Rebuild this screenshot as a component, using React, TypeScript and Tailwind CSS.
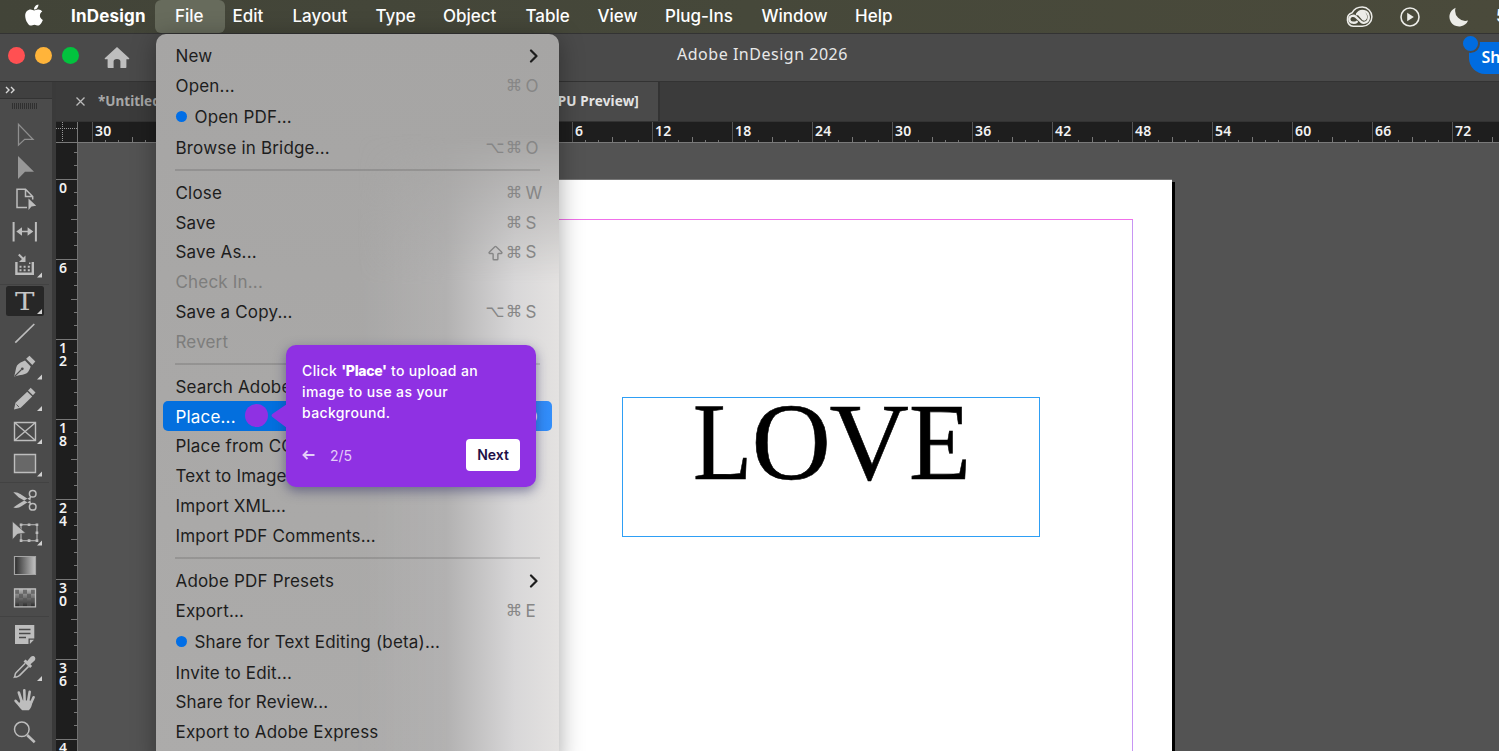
import type { ReactNode } from 'react';
import { ArrowBigUp } from 'lucide-react';
import { FaApple } from 'react-icons/fa';

const ICON = '#bdbdbd';

const menuBarItems = [
  { label: 'Edit', width: 'w-[60px]' },
  { label: 'Layout', width: 'w-[83px]' },
  { label: 'Type', width: 'w-[67.5px]' },
  { label: 'Object', width: 'w-[82.5px]' },
  { label: 'Table', width: 'w-[72px]' },
  { label: 'View', width: 'w-[67.5px]' },
  { label: 'Plug-Ins', width: 'w-[96.5px]' },
  { label: 'Window', width: 'w-[93.5px]' },
  { label: 'Help', width: 'w-[60px]' },
];

type MenuEntry = {
  label: string;
  keys?: string;
  letter?: string;
  dot?: boolean;
  submenu?: boolean;
  disabled?: boolean;
  active?: boolean;
};

const fileMenu: MenuEntry[][] = [
  [
    { label: 'New', submenu: true },
    { label: 'Open...', keys: '⌘', letter: 'O' },
    { label: 'Open PDF...', dot: true },
    { label: 'Browse in Bridge...', keys: '⌥⌘', letter: 'O' },
  ],
  [
    { label: 'Close', keys: '⌘', letter: 'W' },
    { label: 'Save', keys: '⌘', letter: 'S' },
    { label: 'Save As...', keys: '⇧⌘', letter: 'S' },
    { label: 'Check In...', disabled: true },
    { label: 'Save a Copy...', keys: '⌥⌘', letter: 'S' },
    { label: 'Revert', disabled: true },
  ],
  [
    { label: 'Search Adobe Stock...' },
    { label: 'Place...', keys: '⌘', letter: 'D', active: true },
    { label: 'Place from CC Libraries...' },
    { label: 'Text to Image' },
    { label: 'Import XML...' },
    { label: 'Import PDF Comments...' },
  ],
  [
    { label: 'Adobe PDF Presets', submenu: true },
    { label: 'Export...', keys: '⌘', letter: 'E' },
    { label: 'Share for Text Editing (beta)...', dot: true },
    { label: 'Invite to Edit...' },
    { label: 'Share for Review...' },
    { label: 'Export to Adobe Express' },
  ],
];

const horizontalLabels = [30, 24, 18, 12, 6, 0, 6, 12, 18, 24, 30, 36, 42, 48, 54, 60, 66, 72];
const verticalLabels = [0, 6, 12, 18, 24, 30, 36, 42];

function CreativeCloudIcon() {
  return (
    <svg width="28" height="22" viewBox="0 0 28 22" fill="none" stroke="#ecece8">
      <path
        d="M8.300 20.300a7 7 0 0 1-1.300-13.500C9 3.300 12.800 1.100 17.300 1.100a9.600 9.600 0 0 1 0 19.200z"
        strokeWidth="1.500"
      />
      <path
        d="M11.800 15.800c-1.500 1.300-7 1.800-7.500-2.200-.3-4 4.500-4.600 6.300-3l5.700 5.400c2.400 1.900 7.600.5 7.500-4.900-.2-7-8.700-8.200-11.800-2.900"
        strokeWidth="2.300"
        strokeLinecap="round"
      />
      <path d="M13.500 8.300c2.600-3.300 6-2.100 7.100.2 1.600 3.300-.2 6-2.700 4.800z" fill="#ecece8" strokeWidth="2" />
    </svg>
  );
}

function MenuBar() {
  return (
    <header className="flex h-[33px] shrink-0 items-center bg-gradient-to-r from-[#424438] via-[#46483a] to-[#4a4a3b] text-[17px] font-medium text-white">
      <FaApple className="-mt-[3px] ml-[22px] size-[24px]" />
      <div className="ml-[25px] w-[84px] font-bold tracking-[0.2px]">InDesign</div>
      <div className="flex h-full w-[70px] items-center rounded-md bg-[#676b5c] pl-[20px]">File</div>
      <nav className="ml-[7.500px] flex">
        {menuBarItems.map((item) => (
          <span key={item.label} className={item.width}>
            {item.label}
          </span>
        ))}
      </nav>
      <div className="ml-auto flex items-center">
        <CreativeCloudIcon />
        <svg className="ml-[26px]" width="22" height="22" viewBox="0 0 22 22">
          <circle cx="11" cy="11" r="9" fill="none" stroke="#ecece8" strokeWidth="1.600" />
          <path d="M8.200 6.800v8.400l6.600-4.200z" fill="#ecece8" />
        </svg>
        <svg className="ml-[27px]" width="22" height="22" viewBox="0 0 22 22">
          <path d="M7.600 1.800a10.200 10.200 0 0 0 12.500 12.700A9.700 9.700 0 1 1 7.600 1.800z" fill="#ecece8" />
        </svg>
        <span className="ml-[26px] w-[3px] overflow-hidden">5</span>
      </div>
    </header>
  );
}

function TitleBar() {
  return (
    <div className="relative flex h-[49px] shrink-0 items-center border-y border-[#333] bg-[#4a4a4a]">
      <div className="flex gap-2.5 pb-[5px] pl-2">
        <span className="size-[17px] rounded-full bg-[#ff5052]" />
        <span className="size-[17px] rounded-full bg-[#ffb43a]" />
        <span className="size-[17px] rounded-full bg-[#02c33e]" />
      </div>
      <svg className="ml-[25px]" width="26" height="22" viewBox="104 47 26 22">
        <path
          d="M117 47l12 11c.6.8.3 1.300-.6 1.300h-2V67.200c0 .6-.3.800-.8.800h-5.200v-6.500c0-1.500-1-2.500-3.400-2.500s-3.400 1-3.400 2.500V68h-5.200c-.5 0-.8-.2-.8-.8v-7.900h-2c-.9 0-1.200-.5-.6-1.300z"
          fill="#bebebe"
        />
      </svg>
      <div className="ml-[547px] w-[175px] pb-[7px] font-['Noto_Sans'] text-[16px] tracking-[0.52px] whitespace-nowrap text-[#e8e8e8]">
        Adobe InDesign 2026
      </div>
      <div className="ml-auto flex h-[32px] w-[30px] items-center overflow-hidden rounded-bl-2xl bg-[#006ce0] pb-0.5 pl-[12.500px] font-['Noto_Sans'] text-[16px] font-semibold text-white">
        Sh
      </div>
      <span className="absolute top-0 left-[1461px] size-[19px] rounded-full border-2 border-[#4a4a4a] bg-[#006ce0]" />
    </div>
  );
}

function Tool({ top, height, flyout, children }: { top: number; height: number; flyout?: number; children: ReactNode }) {
  return (
    <svg className="block shrink-0" width="52" height={height} viewBox={`0 ${top} 52 ${height}`} fill="none">
      {children}
      {flyout && <path d={`M42 ${flyout - 5}v5h-5z`} fill="#d0d0d0" />}
    </svg>
  );
}

function ToolDivider() {
  return (
    <div className="flex h-1 shrink-0 items-center">
      <div className="h-px w-[49px] bg-[#424242]" />
    </div>
  );
}

function Toolbar() {
  return (
    <aside className="flex w-[53px] shrink-0 flex-col overflow-hidden border-r border-[#3a3a3a] bg-[#4b4b4b]">
      <div className="flex h-[17px] shrink-0 items-center border-b border-[#333] bg-[#404040] pl-[5px]">
        <svg width="11" height="8" viewBox="0 0 11 8" fill="none" stroke="#d8d8d8" strokeWidth="1.400">
          <path d="M1 1l3 3-3 3M6 1l3 3-3 3" />
        </svg>
      </div>
      <div className="flex h-[19px] shrink-0 gap-[1px] pt-[4px] pl-[12px]">
        {Array.from({ length: 13 }, (_, i) => (
          <span key={i} className="h-[6px] w-px bg-[#303030]" />
        ))}
      </div>
      <Tool top={118} height={32}>
        <path d="M18.500 124.300v20.800l6.200-5.800h8.300z" stroke="#8f8f8f" strokeWidth="1.300" />
      </Tool>
      <Tool top={150} height={33}>
        <path d="M18 156v23l7-7.200h9z" fill="#989898" />
      </Tool>
      <Tool top={183} height={32}>
        <path d="M27 207.500H17v-18.300h8.500l7.200 7.300v3M25.500 189.200v7.300h7.200" stroke={ICON} strokeWidth="1.500" />
        <path d="M28.500 198.500v11.500l3-3.500 4.700-.8z" fill={ICON} />
      </Tool>
      <Tool top={215} height={33}>
        <path d="M13.600 222v19.500M35.900 222v19.500" stroke={ICON} strokeWidth="2" />
        <path d="M19 231.500h12" stroke={ICON} strokeWidth="1.500" />
        <path d="M16.300 231.500l5.700-4.200v8.400zM33.300 231.500l-5.700-4.200v8.400z" fill={ICON} />
      </Tool>
      <Tool top={248} height={34} flyout={277.500}>
        <path d="M18.800 254.500l4.500 4.500" stroke={ICON} strokeWidth="2" />
        <path d="M25.500 255.500v6.500h-6.500z" fill={ICON} />
        <path d="M16.400 262v11.800h16.400V262" stroke={ICON} strokeWidth="2.400" />
        <path d="M19.500 265.700h2v2h-2zM19.500 269.200h2v2h-2zM23.600 265.700h2v2h-2zM23.600 269.200h2v2h-2zM27.800 265.700h2v2h-2zM27.800 269.200h2v2h-2zM29 262.500h1.500v1.500H29z" fill={ICON} />
      </Tool>
      <ToolDivider />
      <Tool top={286} height={31}>
        <rect x="6" y="286" width="38" height="30" rx="2.500" fill="#272727" />
        <text x="15" y="310" fill="#c4c4c4" fontSize="25" fontFamily="DejaVu Serif, serif" textLength="19.500" lengthAdjust="spacingAndGlyphs">
          T
        </text>
        <path d="M42 309v5h-5z" fill="#d0d0d0" />
      </Tool>
      <Tool top={317} height={33}>
        <path d="M15.300 342.700L34.300 324" stroke={ICON} strokeWidth="1.700" />
      </Tool>
      <Tool top={350} height={33} flyout={379.500}>
        <path d="M29.500 355.700l5.800 5.700-3 3.600-6.200-6.200z" fill={ICON} />
        <path d="M14 376.800c1.500-4 1.600-8.600 3-11.300 1.500-2 5.300-3.800 8-4.900l5.700 5.800c-1 2.600-2 5-4 6.900-2.700 1.900-8.700 1.700-12.700 3.500z" fill={ICON} />
        <path d="M14.500 376.500l7-7" stroke="#4b4b4b" strokeWidth="1.100" />
        <circle cx="22.300" cy="368.800" r="1.400" fill="#4b4b4b" />
      </Tool>
      <Tool top={383} height={33} flyout={411}>
        <path d="M30.700 387.700l4.800 4.700-2.600 2.900-4.900-4.800z" fill={ICON} />
        <path d="M27.200 391.700l5 4.900-11.500 11.200-6.700 1.600 1.500-6.700z" fill={ICON} />
        <path d="M16.500 404.500l2.500 2.600" stroke="#4b4b4b" strokeWidth="0.900" />
      </Tool>
      <Tool top={416} height={32} flyout={444}>
        <path d="M14.500 422.500h21v18h-21zM14.500 422.500l21 18M35.500 422.500l-21 18" stroke={ICON} strokeWidth="1.400" />
      </Tool>
      <Tool top={448} height={32} flyout={476.500}>
        <path d="M14.500 454.500h21v18h-21z" fill="#686868" stroke={ICON} strokeWidth="1.400" />
      </Tool>
      <ToolDivider />
      <Tool top={484} height={33}>
        <circle cx="32.700" cy="493.800" r="3.300" stroke={ICON} strokeWidth="1.500" />
        <circle cx="32.700" cy="506.800" r="3.300" stroke={ICON} strokeWidth="1.500" />
        <path d="M13.300 492.300c3-.6 5 .5 7 1.800l10 6.300 1 4-12.500-6.800zM13.300 507.500c3 1 6 .2 8.500-1.500l8.500-5.500 1-4.300-12.500 7.500z" fill={ICON} />
      </Tool>
      <Tool top={517} height={32} flyout={545.500}>
        <path d="M21 524.700h16v16H21z" stroke={ICON} strokeWidth="1.100" />
        <path d="M19.700 523.400h2.700v2.700h-2.700zM27.700 523.400h2.700v2.700h-2.700zM35.600 523.400h2.700v2.700h-2.700zM35.600 531.400h2.700v2.700h-2.700zM35.600 539.300h2.700v2.700h-2.700zM27.700 539.300h2.700v2.700h-2.700zM19.700 539.300h2.700v2.700h-2.700z" fill={ICON} />
        <path d="M12.500 521.500v18l5-5.400 8-1.200z" fill={ICON} stroke="#4b4b4b" strokeWidth="0.500" />
      </Tool>
      <Tool top={549} height={33}>
        <defs>
          <linearGradient id="swatch">
            <stop offset="0" stopColor="#2b2b2b" />
            <stop offset="1" stopColor="#c4c4c4" />
          </linearGradient>
        </defs>
        <path d="M14.500 556.500h21v18h-21z" fill="url(#swatch)" stroke="#a4a4a4" strokeWidth="1.200" />
      </Tool>
      <Tool top={582} height={32}>
        <defs>
          <linearGradient id="feather" x2="0" y2="1">
            <stop offset="0" stopColor="#b5b5b5" />
            <stop offset="1" stopColor="#2a2a2a" />
          </linearGradient>
        </defs>
        <path d="M14.500 588.800h21v18h-21z" fill="url(#feather)" />
        {[0, 1, 2, 3].map((row) =>
          [0, 1, 2].map((col) => (
            <rect key={`${row}-${col}`} x={15 + col * 8 + (row % 2) * 4} y={589.5 + row * 4.3} width={col === 2 && row % 2 ? 0 : 4} height="4.300" fill="#555" fillOpacity="0.700" />
          ))
        )}
        <path d="M14.500 588.800h21v18h-21z" stroke={ICON} strokeWidth="1.300" />
      </Tool>
      <ToolDivider />
      <Tool top={618} height={33}>
        <path d="M15 625h19.300v13.500h-5.800V644H15z" fill={ICON} />
        <path d="M34 639.800L29.800 644v-4.200z" fill={ICON} />
        <path d="M19 629.500h11.500M19 633.500h11.500M19 637.500h7" stroke="#4b4b4b" strokeWidth="1.400" />
      </Tool>
      <Tool top={651} height={33} flyout={681}>
        <path d="M25.300 663.300L16 672.800c-1.500 1.600-.4 2-1.500 4.300 2.300-.5 3.200.3 4.900-1.500l9.200-9.200" stroke={ICON} strokeWidth="1.500" />
        <path d="M23.500 661.500l2-2 1.800 1.500 3.600-4.200c2.800-2.200 5.800 1 3.800 3.800l-4.200 3.600 1.600 1.900-2 2z" fill={ICON} />
      </Tool>
      <Tool top={684} height={32}>
        <path
          d="M18.800 692.500l3.200 9.500M24.300 690.200l.3 10.800M29.700 691.800L28 702M33.600 697.300l-2.800 6.200M15.600 700.800l5.400 6"
          stroke={ICON}
          strokeWidth="2.600"
          strokeLinecap="round"
        />
        <path d="M20.800 700.500h9.300l2.200 1.500c-.3 4.200-1.500 6.300-3.500 8.300h-6.500c-1.800-1.200-2.500-3-4.300-5.300z" fill={ICON} />
      </Tool>
      <Tool top={716} height={33}>
        <circle cx="21.800" cy="729.300" r="7.300" stroke={ICON} strokeWidth="1.500" />
        <path d="M27.300 735.300l7.400 6.900" stroke={ICON} strokeWidth="2.600" />
      </Tool>
    </aside>
  );
}

function HorizontalRuler() {
  return (
    <div className="flex h-[21px] shrink-0 overflow-hidden border-b border-[#7a7a7a] bg-[#1e1e1e]">
      <svg className="shrink-0" width="36" height="20" viewBox="0 0 36 20">
        <path d="M0 6.500h21M6.500 0v20" stroke="#999" strokeDasharray="1 1" />
        <path d="M21.500 0v20" stroke="#777" />
      </svg>
      {horizontalLabels.map((label, i) => (
        <div key={i} className="flex w-20 shrink-0 border-l border-[#555] font-['Noto_Sans'] text-[14px] leading-[17px] font-semibold text-[#f2f2f2]">
          <span className="w-0 pl-[2px] tracking-[0.3px]">{label}</span>
          <svg width="77" height="20" viewBox="3 0 77 20">
            <path d="M13.500 18v2M26.500 18v2M53.500 18v2M66.500 18v2M40.500 15v5" stroke="#777" />
          </svg>
        </div>
      ))}
    </div>
  );
}

function VerticalRuler() {
  return (
    <div className="flex w-[22px] shrink-0 flex-col overflow-hidden border-r border-[#707070] bg-[#1e1e1e]">
      <svg className="shrink-0" width="21" height="36" viewBox="0 -1 21 36">
        <path d="M18 8.500h3M18 21.500h3" stroke="#777" />
      </svg>
      {verticalLabels.map((label) => (
        <div key={label} className="flex h-20 shrink-0 border-t border-[#777] font-['Noto_Sans'] text-[14px] leading-[12.500px] font-semibold text-[#f2f2f2]">
          <div className="flex w-[14px] flex-col items-center pt-[2px]">
            {String(label).split('').map((digit, i) => (
              <span key={i}>{digit}</span>
            ))}
          </div>
          <svg width="7" height="79" viewBox="0 1 7 79">
            <path d="M4 13.500h3M4 26.500h3M4 53.500h3M4 66.500h3M1 40.500h6" stroke="#777" />
          </svg>
        </div>
      ))}
    </div>
  );
}

function Artboard() {
  return (
    <div className="flex grow overflow-hidden bg-[#535353] pt-[36px] pl-[414px]">
      <div className="flex w-[680px] shrink-0 border-t border-[#777] bg-white pt-[39px] shadow-[3px_3px_0_#000]">
        <div className="flex grow flex-col">
          <div className="h-px w-[641px] shrink-0 bg-[#f070ea]" />
          <div className="flex grow">
            <div className="flex w-[640px] pt-[177px]">
              <div className="ml-[130px] flex h-[140px] w-[418px] border border-[#2e9ff5] pl-[70px] font-['Liberation_Serif'] text-[110px] leading-[88px] text-black [-webkit-text-stroke:0.6px_black]">
                <span className="w-[58.500px] origin-left scale-x-[0.88]">L</span>
                <span className="w-[78px]">O</span>
                <span className="w-[79.500px]">V</span>
                <span className="w-[60px] origin-left scale-x-[0.92]">E</span>
              </div>
            </div>
            <div className="w-px bg-[#c795f3]" />
          </div>
        </div>
      </div>
    </div>
  );
}

function DocumentArea() {
  return (
    <main className="flex grow flex-col overflow-hidden border-l-[3px] border-[#3a3a3a]">
      <div className="flex h-[40px] shrink-0 items-center border-b border-[#333] bg-[#3b3b3b] font-['Noto_Sans'] text-[13.500px] font-bold">
        <div className="flex w-[300px] items-center gap-[13px] pl-[20px] text-[#a8a8a8]">
          <svg width="9" height="9" viewBox="0 0 9 9" stroke="#bbb" strokeWidth="1.300">
            <path d="M.5.5l8 8M8.500.5l-8 8" />
          </svg>
          *Untitled-1
        </div>
        <div className="flex h-full w-[304px] items-center justify-end border-r-2 border-[#333] bg-[#4a4a4a] pr-[19px] tracking-[0.15px] text-[#e4e4e4]">
          [GPU Preview]
        </div>
      </div>
      <HorizontalRuler />
      <div className="flex grow overflow-hidden">
        <VerticalRuler />
        <Artboard />
      </div>
    </main>
  );
}

function ShortcutKey({ symbol }: { symbol: string }) {
  if (symbol === '⇧') {
    return (
      <span className="flex w-[19px] justify-center">
        <ArrowBigUp size={19} strokeWidth={1.8} />
      </span>
    );
  }
  return <span className="w-[19px] text-center font-['DejaVu_Sans'] text-[16.500px]">{symbol}</span>;
}

function MenuRow({ entry }: { entry: MenuEntry }) {
  const tone = entry.active
    ? 'bg-gradient-to-r from-[#036fde] from-60% to-[#338efa] text-white'
    : entry.disabled
      ? 'text-[#7d7d7c]'
      : 'text-[#1d1d1d]';
  return (
    <li className={`mx-[7px] flex shrink-0 items-center rounded-[5px] pl-[12.500px] ${entry.dot ? 'h-8' : 'h-[29.850px]'} ${tone}`}>
      {entry.dot && <span className="mr-2 size-[11px] rounded-full bg-[#016ee6]" />}
      <span className="grow pt-0.5 tracking-[0.18px] whitespace-nowrap">{entry.label}</span>
      {entry.submenu && (
        <svg className="mr-[13px]" width="10" height="14" viewBox="0 0 10 14" fill="none" stroke="#1d1d1d" strokeWidth="2.200">
          <path d="M2 1.500L7.500 7 2 12.500" strokeLinecap="round" strokeLinejoin="round" />
        </svg>
      )}
      {entry.keys && (
        <span className={`flex items-center pt-0.5 ${entry.active ? 'text-white' : 'text-[#868686]'}`}>
          {entry.keys.split('').map((key) => (
            <ShortcutKey key={key} symbol={key} />
          ))}
          <span className="w-[28.500px] pl-0.5">{entry.letter}</span>
        </span>
      )}
    </li>
  );
}

function FileMenu() {
  return (
    <div className="absolute top-[34px] left-[156px] h-[730px] w-[403px] overflow-hidden rounded-t-[10px] bg-gradient-to-b from-[#a6a5a4] to-[#acabaa] shadow-[0_4px_24px_rgba(0,0,0,0.35)]">
      <div className="absolute inset-0 bg-[linear-gradient(to_right,transparent_50%,#b2b1b1_72%,#d8d7d8_89%,#e4e2e1_100%)] [mask-image:linear-gradient(to_bottom,transparent_100px,black_250px)]" />
      <div className="relative pt-[7px] text-[17px]">
        {fileMenu.map((group, i) => (
          <div key={i}>
            {i > 0 && (
              <div className="flex h-[15px] items-center px-[19px]">
                <div className="h-0.5 w-full bg-black/12" />
              </div>
            )}
            <ul className="flex flex-col">
              {group.map((entry) => (
                <MenuRow key={entry.label} entry={entry} />
              ))}
            </ul>
          </div>
        ))}
      </div>
    </div>
  );
}

function StepTooltip() {
  return (
    <>
      <span className="absolute top-[404px] left-[244.500px] size-[23px] rounded-full bg-[#8f31e3]" />
      <div className="absolute top-[345px] left-[286px] flex h-[142px] w-[250px] flex-col rounded-[10px] bg-[#8f31e3] px-4 pt-[15px] pb-4 text-white shadow-[0_4px_12px_rgba(40,40,100,0.5)]">
        <svg className="absolute top-[59px] -left-[15px]" width="16" height="24" viewBox="0 0 16 24">
          <path d="M16 0L2 9.500q-3 2 0 4L16 24z" fill="#8f31e3" />
        </svg>
        <p className="text-[14px] leading-[21px] font-medium tracking-[0.37px] whitespace-nowrap">
          Click <b className="font-extrabold tracking-[-0.3px]">&apos;Place&apos;</b> to upload an
          <br />
          image to use as your
          <br />
          background.
        </p>
        <div className="mt-auto flex items-center">
          <svg width="13" height="10" viewBox="0 0 13 10" fill="none" stroke="#e3cdf8" strokeWidth="1.900">
            <path d="M12.500 5H1.500M5.500 1l-4 4 4 4" />
          </svg>
          <span className="ml-[15px] text-[14px] text-[#e3cdf8]">2/5</span>
          <button className="ml-auto h-8 w-[54px] rounded bg-white pb-0.5 text-[14px] font-semibold text-[#1f1147]">Next</button>
        </div>
      </div>
    </>
  );
}

export default function App() {
  return (
    <div className="relative flex h-[751px] w-[1499px] flex-col overflow-hidden bg-[#3a3a3a] font-['Inter',sans-serif]">
      <MenuBar />
      <TitleBar />
      <div className="flex grow overflow-hidden">
        <Toolbar />
        <DocumentArea />
      </div>
      <FileMenu />
      <StepTooltip />
    </div>
  );
}
